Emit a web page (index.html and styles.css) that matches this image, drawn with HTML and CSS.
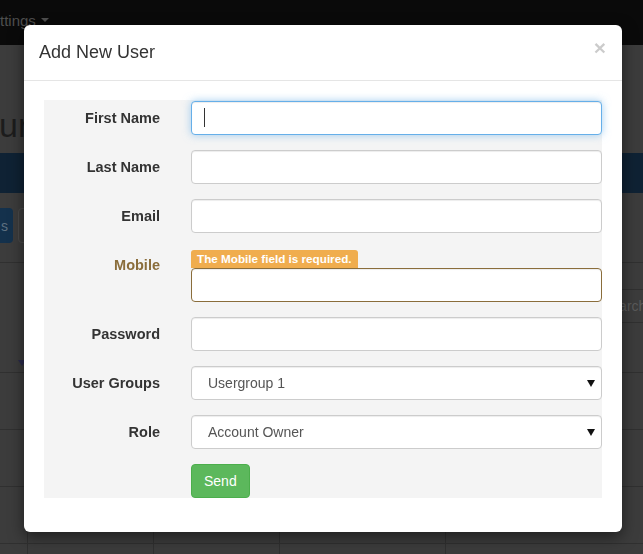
FILE: index.html
```html
<!DOCTYPE html>
<html lang="en">
<head>
<meta charset="utf-8">
<title>Add New User</title>
<link rel="stylesheet" href="styles.css">
</head>
<body>
<div class="page">
  <nav class="nav"><span class="nav-link">ttings <span class="nav-caret"></span></span></nav>
  <header class="page-head"><h1 class="page-title">ur</h1></header>
  <div class="band"></div>
  <div class="toolbar"><span class="tb-btn tb-primary">s</span><span class="tb-btn tb-default"></span></div>
  <div class="filters"><input class="search" placeholder="Search"></div>
  <div class="trow thead"><div class="cell"><span class="sort-caret"></span></div><div class="cell"></div><div class="cell"></div><div class="cell"></div><div class="cell"></div></div>
  <div class="trow"><div class="cell"></div><div class="cell"></div><div class="cell"></div><div class="cell"></div><div class="cell"></div></div>
  <div class="trow"><div class="cell"></div><div class="cell"></div><div class="cell"></div><div class="cell"></div><div class="cell"></div></div>
  <div class="trow"><div class="cell"></div><div class="cell"></div><div class="cell"></div><div class="cell"></div><div class="cell"></div></div>
  <div class="trow trow-end"><div class="cell"></div><div class="cell"></div><div class="cell"></div><div class="cell"></div><div class="cell"></div></div>
</div>

<div class="modal">
  <div class="modal-header">
    <h4 class="modal-title">Add New User</h4>
    <button class="close" type="button">×</button>
  </div>
  <div class="modal-body">
    <form class="form-panel">
      <div class="form-row">
        <label class="form-label">First Name</label>
        <div class="field"><input class="form-input is-focus" type="text"><span class="text-caret"></span></div>
      </div>
      <div class="form-row">
        <label class="form-label">Last Name</label>
        <div class="field"><input class="form-input" type="text"></div>
      </div>
      <div class="form-row">
        <label class="form-label">Email</label>
        <div class="field"><input class="form-input" type="text"></div>
      </div>
      <div class="form-row has-warning">
        <label class="form-label">Mobile</label>
        <div class="field field-stack"><span class="warn-badge">The Mobile field is required.</span><input class="form-input" type="text"></div>
      </div>
      <div class="form-row">
        <label class="form-label">Password</label>
        <div class="field"><input class="form-input" type="password"></div>
      </div>
      <div class="form-row">
        <label class="form-label">User Groups</label>
        <div class="field select-wrap"><select class="form-input form-select"><option>Usergroup 1</option></select></div>
      </div>
      <div class="form-row">
        <label class="form-label">Role</label>
        <div class="field select-wrap"><select class="form-input form-select"><option>Account Owner</option></select></div>
      </div>
      <div class="form-row form-row-last">
        <span></span>
        <div class="field"><button class="btn-send" type="button">Send</button></div>
      </div>
    </form>
  </div>
</div>
</body>
</html>
```

FILE: styles.css
```css
* { box-sizing: border-box; }

html, body {
  margin: 0;
  width: 643px;
  height: 554px;
  overflow: hidden;
}

body {
  background: #3c3c3c;
  font-family: "Liberation Sans", Arial, sans-serif;
  font-size: 14px;
  color: #333;
}

/* ---------- dimmed background page ---------- */
.page { width: 643px; height: 554px; overflow: hidden; }

.nav {
  height: 45px;
  background: #0a0a0a;
  display: flex;
  align-items: center;
  padding-bottom: 5px;
}
.nav-link {
  color: #4e4e4e;
  font-size: 15px;
  display: inline-flex;
  align-items: center;
  gap: 2px;
}
.nav-caret {
  display: inline-block;
  border-left: 4px solid transparent;
  border-right: 4px solid transparent;
  border-top: 4px solid #4e4e4e;
  margin-left: 3px;
}

.page-head {
  height: 108px;
  padding-top: 60px;
}
.page-title {
  margin: 0;
  font-weight: normal;
  font-size: 34px;
  line-height: 40px;
  color: #1c1c1c;
  margin-left: -1px;
}

.band {
  height: 40px;
  background: #0f2234;
}

.toolbar {
  display: flex;
  gap: 5px;
  padding: 15px 0 19px;
  border-bottom: 1px solid #303030;
}
.tb-btn {
  height: 35px;
  border-radius: 4px;
  display: inline-flex;
  align-items: center;
  color: #5e7080;
}
.tb-primary {
  width: 43px;
  margin-left: -30px;
  background: #14314c;
  justify-content: flex-end;
  padding-right: 5px;
}
.tb-default {
  width: 80px;
  border: 1px solid #4a4a4a;
}

.filters {
  padding-top: 26px;
}
.search {
  display: block;
  margin-left: 589px;
  width: 200px;
  height: 34px;
  border: 1px solid #303030;
  border-right: 0;
  background: #3c3c3c;
  padding: 6px 12px;
  font-family: "Liberation Sans", Arial, sans-serif;
  font-size: 14px;
}
.search::placeholder { color: #5a5a5a; }

.trow {
  display: grid;
  grid-template-columns: 27px 126px 126px 166px 1fr;
  height: 57px;
  border-bottom: 1px solid #303030;
}
.trow-end { height: 20px; border-bottom: 0; }
.trow .cell + .cell { border-left: 1px solid #303030; }
.thead { height: 50px; }
.thead .cell + .cell { border-left: 0; }
.sort-caret {
  display: block;
  margin: 37px 0 0 18px;
  width: 0;
  border-left: 4px solid transparent;
  border-right: 4px solid transparent;
  border-top: 6px solid #2a2a4c;
}

/* ---------- modal ---------- */
.modal {
  position: fixed;
  left: 24px;
  top: 25px;
  width: 598px;
  height: 507px;
  background: #fff;
  border-radius: 6px;
  box-shadow: 0 5px 15px rgba(0, 0, 0, 0.5);
}

.modal-header {
  display: flex;
  justify-content: space-between;
  align-items: flex-start;
  padding: 15px;
  border-bottom: 1px solid #e5e5e5;
}
.modal-title {
  margin: 0;
  font-size: 18px;
  font-weight: normal;
  line-height: 25px;
  color: #333;
}
.close {
  border: 0;
  background: transparent;
  padding: 0;
  margin-top: -3px;
  margin-right: 1px;
  font-family: "Liberation Sans", Arial, sans-serif;
  font-size: 21px;
  font-weight: bold;
  line-height: 1;
  color: #000;
  opacity: 0.2;
  text-shadow: 0 1px 0 #fff;
}

.modal-body {
  padding: 19px 20px 34px;
}

.form-panel {
  background: #f4f4f4;
  padding-top: 1px;
  margin: 0;
}

.form-row {
  display: grid;
  grid-template-columns: 116px 1fr;
  column-gap: 31px;
  margin-bottom: 15px;
}
.form-row-last { margin-bottom: 0; }

.form-label {
  text-align: right;
  font-weight: bold;
  font-size: 14.5px;
  padding-top: 7px;
  line-height: 20px;
  color: #333;
}
.has-warning .form-label { color: #8a6d3b; }

.field { position: relative; }
.field-stack {
  display: flex;
  flex-direction: column;
  align-items: flex-start;
}

.form-input {
  display: block;
  width: 100%;
  height: 34px;
  padding: 6px 12px;
  font-family: "Liberation Sans", Arial, sans-serif;
  font-size: 14px;
  line-height: 20px;
  color: #555;
  background: #fff;
  border: 1px solid #ccc;
  border-radius: 4px;
  box-shadow: inset 0 1px 1px rgba(0, 0, 0, 0.075);
  outline: none;
}
.is-focus {
  border-color: #66afe9;
  box-shadow: inset 0 1px 1px rgba(0, 0, 0, 0.075), 0 0 8px rgba(102, 175, 233, 0.6);
}
.has-warning .form-input { border-color: #8a6d3b; }

.text-caret {
  position: absolute;
  left: 13px;
  top: 7px;
  width: 1px;
  height: 19px;
  background: #333;
}

.warn-badge {
  margin-top: 2px;
  height: 18px;
  line-height: 18px;
  padding: 0 6px;
  background: #f0ad4e;
  color: #fff;
  font-size: 11.7px;
  font-weight: bold;
  border-radius: 3px 3px 0 0;
}

.form-select {
  appearance: none;
  -webkit-appearance: none;
  padding-left: 16px;
}
.select-wrap::after {
  content: "";
  position: absolute;
  right: 7px;
  top: 14px;
  border-left: 4px solid transparent;
  border-right: 4px solid transparent;
  border-top: 7px solid #111;
  pointer-events: none;
}

.btn-send {
  display: inline-block;
  height: 34px;
  padding: 6px 12px;
  font-family: "Liberation Sans", Arial, sans-serif;
  font-size: 14px;
  line-height: 20px;
  color: #fff;
  background: #5cb85c;
  border: 1px solid #4cae4c;
  border-radius: 4px;
}
```
